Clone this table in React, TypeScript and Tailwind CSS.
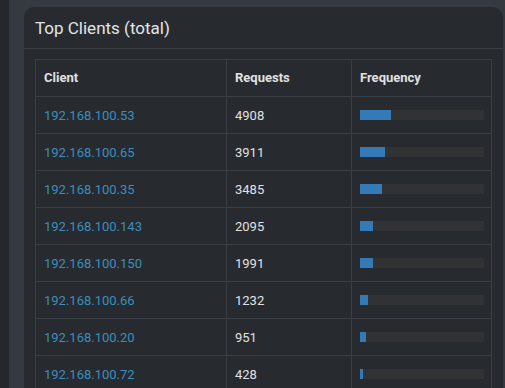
import React from 'react';

interface ClientRow {
  ip: string;
  requests: number;
}

const clients: ClientRow[] = [
  { ip: '192.168.100.53', requests: 4908 },
  { ip: '192.168.100.65', requests: 3911 },
  { ip: '192.168.100.35', requests: 3485 },
  { ip: '192.168.100.143', requests: 2095 },
  { ip: '192.168.100.150', requests: 1991 },
  { ip: '192.168.100.66', requests: 1232 },
  { ip: '192.168.100.20', requests: 951 },
  { ip: '192.168.100.72', requests: 428 },
];

const TOTAL = 19632;

const App: React.FC = () => {
  return (
    <div
      className="flex h-[388px] w-[505px] overflow-hidden bg-[#353a40] text-[#e1e1e1]"
      style={{ fontFamily: 'Roboto, "Noto Sans", sans-serif' }}
    >
      <div className="w-[9px] shrink-0 bg-[#24272b]" />
      <div className="flex-1 pl-[15px] pr-[2px] pt-[7px]">
        <div className="rounded-t-[10px] bg-[#272b30]">
          <div className="border-b border-[#3a3f45] px-[11px] pb-[9px] pt-[10px]">
            <h3 className="text-[17px] leading-[22px] text-[#e4e4e4]">Top Clients (total)</h3>
          </div>
          <div className="px-[11px] pt-[10px]">
            <table className="w-full border-collapse text-[13px]">
              <thead>
                <tr className="h-[37px]">
                  <th className="w-[191px] border border-[#3a3f45] pl-[8px] text-left font-bold">Client</th>
                  <th className="w-[125px] border border-[#3a3f45] pl-[8px] text-left font-bold">Requests</th>
                  <th className="border border-[#3a3f45] pl-[8px] text-left font-bold">Frequency</th>
                </tr>
              </thead>
              <tbody>
                {clients.map((c) => (
                  <tr key={c.ip} className="h-[37px]">
                    <td className="border border-[#3a3f45] pl-[8px] pt-[1px] text-[#3c8dbc]">{c.ip}</td>
                    <td className="border border-[#3a3f45] pl-[8px] pt-[1px]">{c.requests}</td>
                    <td className="border border-[#3a3f45] pl-[8px] pr-[7px]">
                      <div className="h-[10px] w-full bg-[#313234]">
                        <div
                          className="h-full bg-[#337ab7]"
                          style={{ width: `${(c.requests / TOTAL) * 100}%` }}
                        />
                      </div>
                    </td>
                  </tr>
                ))}
              </tbody>
            </table>
          </div>
        </div>
      </div>
    </div>
  );
};

export default App;
